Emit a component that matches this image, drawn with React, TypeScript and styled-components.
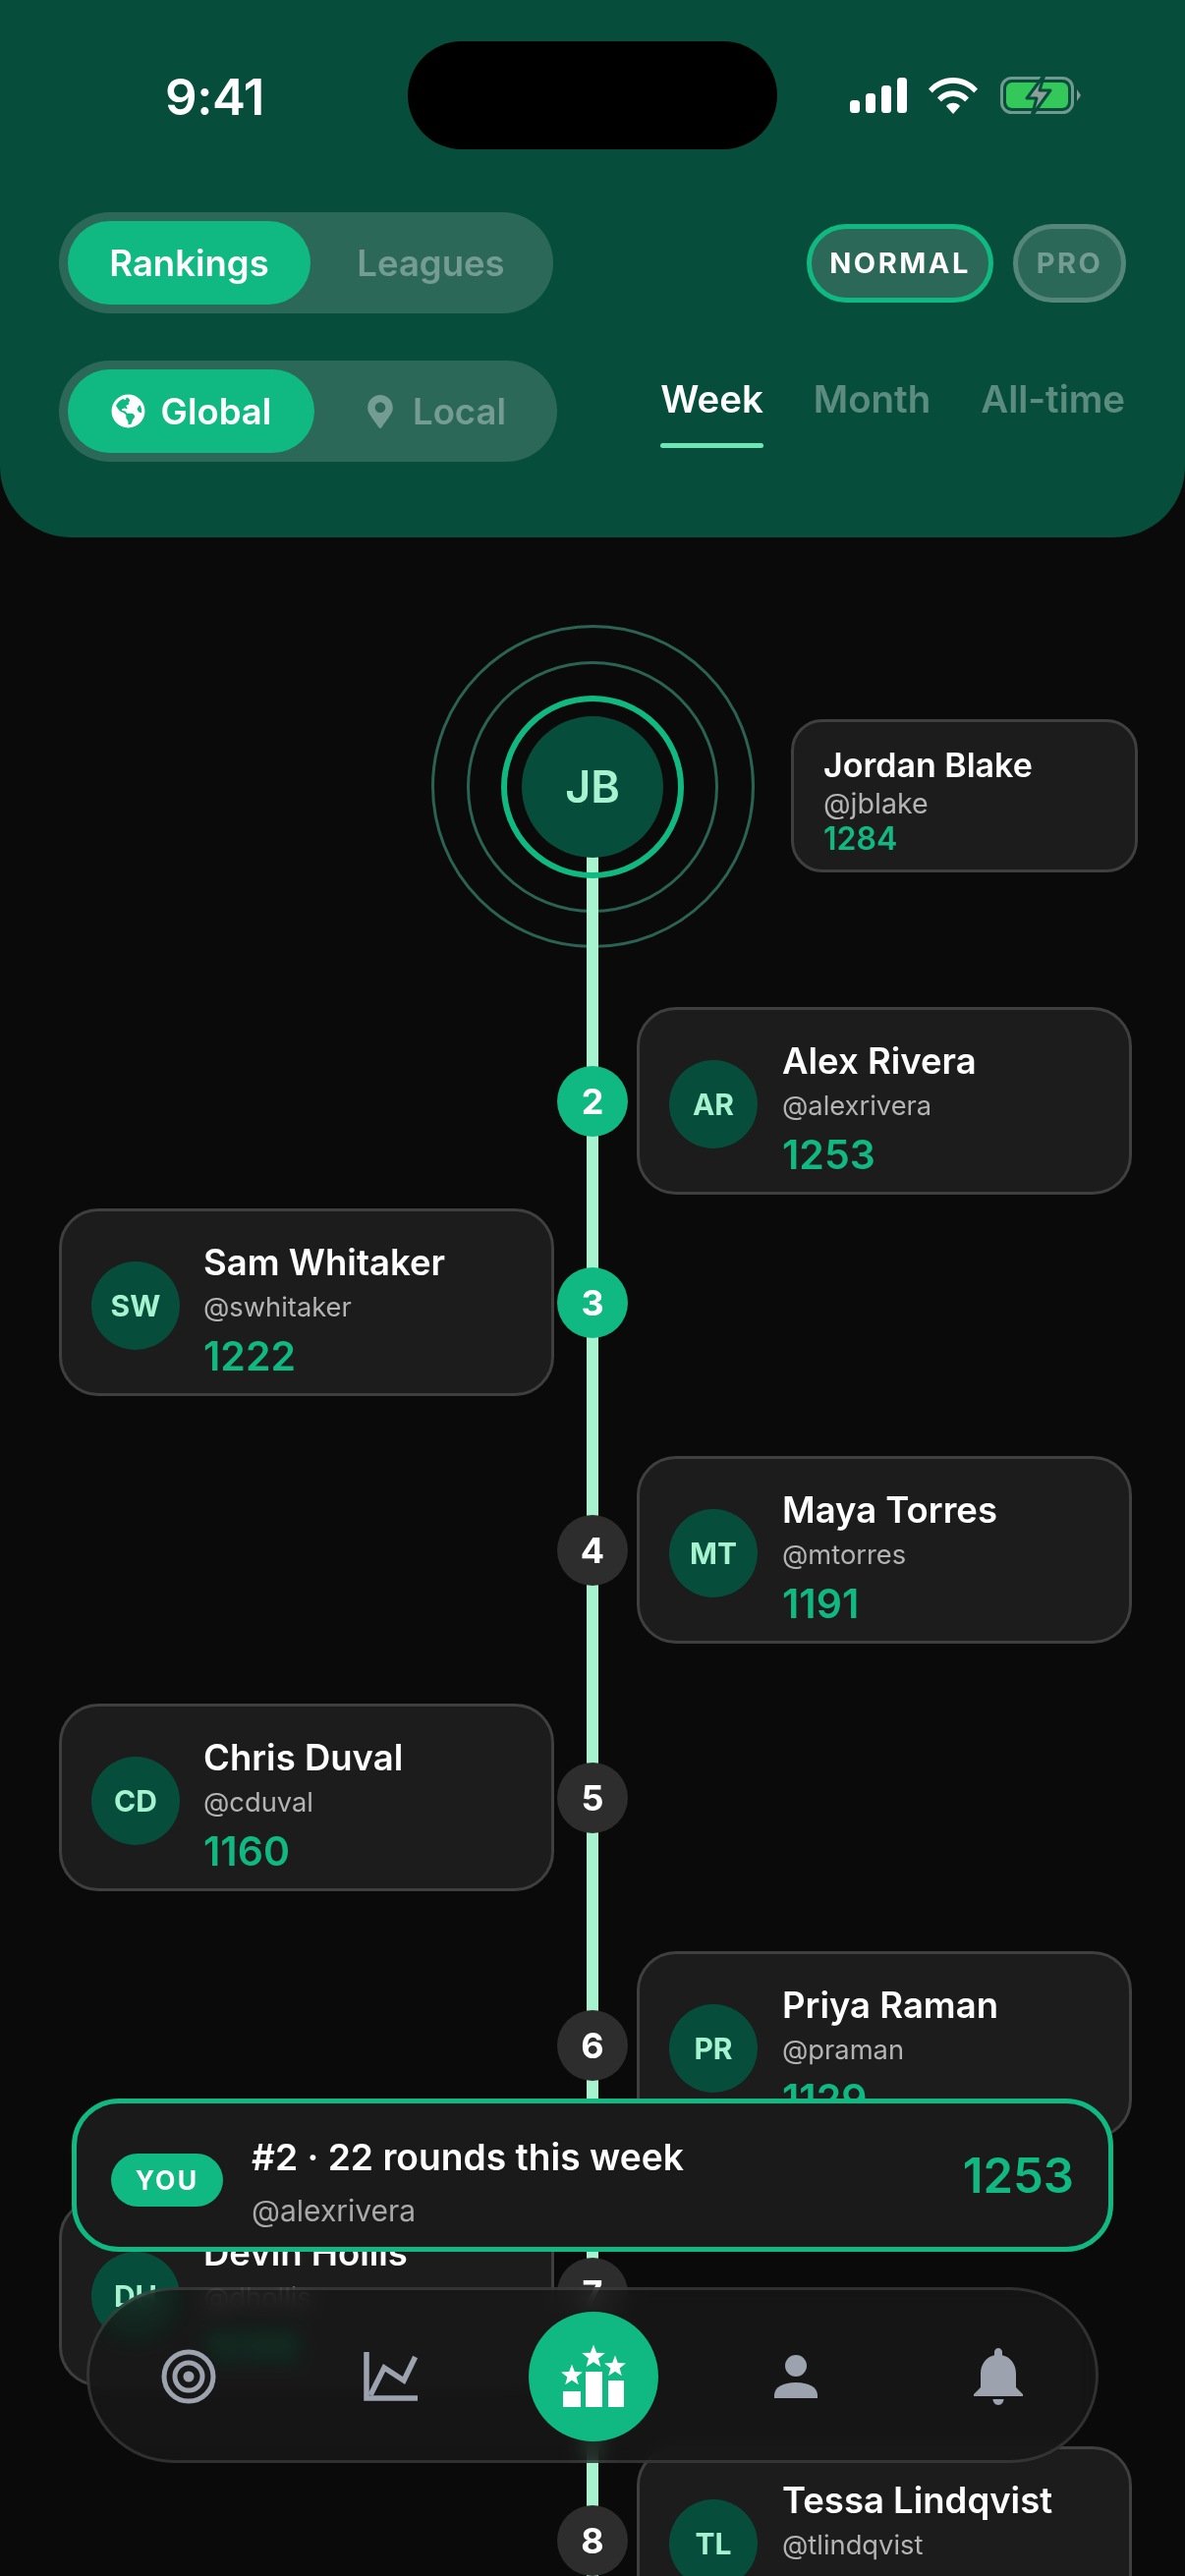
import React from 'react';
import styled, { createGlobalStyle } from 'styled-components';
import { FaGlobeAmericas, FaMapMarkerAlt } from 'react-icons/fa';

const GlobalStyle = createGlobalStyle`
  html, body { margin: 0; padding: 0; background: #0a0a0a; }
  * { box-sizing: border-box; }
  body { font-family: Inter, "Noto Sans", sans-serif; }
`;

const Page = styled.div`
  position: relative;
  width: 1206px;
  height: 2622px;
  overflow: hidden;
  background: #0a0a0a;
  color: #fff;
`;

// Header
const Header = styled.header`
  height: 547px;
  background: #064e3b;
  border-radius: 0 0 72px 72px;
  padding-top: 42px;
`;

const StatusBar = styled.div`
  display: grid;
  grid-template-columns: 415px 376px 415px;
  height: 110px;
  align-items: center;
`;

const Time = styled.div`
  font-size: 51px;
  font-weight: 600;
  letter-spacing: -0.5px;
  text-align: center;
  margin-left: 22px;
  margin-top: 2px;
`;

const Island = styled.div`
  height: 110px;
  background: #000;
  border-radius: 55px;
`;

const StatusIcons = styled.div`
  display: flex;
  align-items: center;
  padding-left: 74px;
`;

const ControlRow = styled.div<{ $top: number }>`
  display: flex;
  justify-content: space-between;
  align-items: center;
  padding: 0 60px;
  margin-top: ${p => p.$top}px;
`;

const Toggle = styled.div<{ $w: number }>`
  display: flex;
  align-items: center;
  width: ${p => p.$w}px;
  height: 103px;
  padding: 9px;
  border-radius: 52px;
  background: rgba(255, 255, 255, 0.15);
`;

const ToggleBtn = styled.div<{ $active?: boolean; $w: number }>`
  display: flex;
  align-items: center;
  justify-content: center;
  gap: 16px;
  width: ${p => p.$w}px;
  height: 85px;
  border-radius: 43px;
  font-size: 36.5px;
  font-weight: 600;
  padding-left: ${p => (p.$active ? 0 : 8)}px;
  background: ${p => (p.$active ? '#10b981' : 'transparent')};
  color: ${p => (p.$active ? '#fff' : 'rgba(255, 255, 255, 0.35)')};
`;

const Modes = styled.div`
  display: flex;
  gap: 20px;
`;

const ModePill = styled.div<{ $active?: boolean; $w: number }>`
  display: flex;
  align-items: center;
  justify-content: center;
  width: ${p => p.$w}px;
  height: 80px;
  border-radius: 40px;
  border: 5px solid ${p => (p.$active ? '#10b981' : 'rgba(255, 255, 255, 0.2)')};
  background: rgba(255, 255, 255, 0.15);
  color: ${p => (p.$active ? '#fff' : 'rgba(255, 255, 255, 0.35)')};
  font-size: 29px;
  font-weight: 700;
  letter-spacing: 2.5px;
`;

const Tabs = styled.div`
  display: flex;
  gap: 51px;
  margin-top: -26px;
  margin-right: 1px;
`;

const Tab = styled.div<{ $active?: boolean }>`
  position: relative;
  font-size: 38.4px;
  line-height: 46px;
  font-weight: 600;
  color: ${p => (p.$active ? '#fff' : 'rgba(255, 255, 255, 0.35)')};

  &::after {
    content: '';
    display: ${p => (p.$active ? 'block' : 'none')};
    position: absolute;
    left: 0;
    right: 0;
    bottom: -27px;
    height: 5px;
    border-radius: 3px;
    background: #6ee7b7;
  }
`;

// Timeline
const Timeline = styled.main`
  position: relative;
  padding-top: 89px;
`;

const Spine = styled.div`
  position: absolute;
  z-index: 1;
  top: 325px;
  bottom: 0;
  left: 597px;
  width: 12px;
  background: #a7f3d0;
`;

const Hero = styled.div`
  display: grid;
  grid-template-columns: 438px 330px 390px;
  align-items: center;
  height: 329px;
  margin-bottom: 60px;
`;

const Rings = styled.div`
  grid-column: 2;
  position: relative;
  display: flex;
  align-items: center;
  justify-content: center;
  width: 330px;
  height: 329px;
`;

const Ring = styled.div<{ $size: number; $strong?: boolean }>`
  position: absolute;
  z-index: ${p => (p.$strong ? 2 : 0)};
  width: ${p => p.$size}px;
  height: ${p => p.$size}px;
  border-radius: 50%;
  border: ${p => (p.$strong ? '6px solid #10b981' : '3px solid #2b6352')};
`;

const HeroAvatar = styled.div`
  position: relative;
  z-index: 2;
  display: flex;
  align-items: center;
  justify-content: center;
  width: 144px;
  height: 144px;
  border-radius: 50%;
  background: #064e3b;
  color: #a7f3d0;
  font-size: 45px;
  font-weight: 600;
`;

const HeroCard = styled.div`
  width: 353px;
  height: 156px;
  margin-left: 37px;
  margin-top: 18px;
  padding: 11px 30px 0;
  display: flex;
  flex-direction: column;
  justify-content: center;
  background: #1c1c1c;
  border: 3px solid #3f3f3f;
  border-radius: 32px;
`;

const Rows = styled.div`
  display: flex;
  flex-direction: column;
`;

const Row = styled.div<{ $gap: number }>`
  display: grid;
  grid-template-columns: 507px 72px 513px;
  margin-left: 60px;
  align-items: center;
  height: 191px;
  margin-bottom: ${p => p.$gap}px;
`;

const Rank = styled.div<{ $top?: boolean }>`
  position: relative;
  z-index: 2;
  grid-column: 2;
  display: flex;
  align-items: center;
  justify-content: center;
  width: 72px;
  height: 72px;
  border-radius: 50%;
  background: ${p => (p.$top ? '#10b981' : '#2d2d2d')};
  font-size: 36px;
  font-weight: 700;
`;

const Card = styled.div<{ $side: 'left' | 'right' }>`
  grid-column: ${p => (p.$side === 'left' ? 1 : 3)};
  grid-row: 1;
  justify-self: ${p => (p.$side === 'left' ? 'start' : 'end')};
  display: flex;
  align-items: center;
  gap: ${p => (p.$side === 'left' ? 24 : 25)}px;
  width: 504px;
  height: 191px;
  padding: 6px 30px 0;
  background: #1c1c1c;
  border: 3px solid #3f3f3f;
  border-radius: 40px;
`;

const Avatar = styled.div`
  flex: none;
  display: flex;
  align-items: center;
  justify-content: center;
  width: 90px;
  height: 90px;
  border-radius: 50%;
  background: #064e3b;
  color: #a7f3d0;
  font-size: 30px;
  font-weight: 700;
`;

const Info = styled.div`
  display: flex;
  flex-direction: column;
  margin-top: 11px;
`;

const Name = styled.div<{ $small?: boolean }>`
  font-size: ${p => (p.$small ? 34 : 36.5)}px;
  line-height: ${p => (p.$small ? 40 : 46)}px;
  font-weight: 600;
  color: #fff;
`;

const Handle = styled.div<{ $small?: boolean }>`
  font-size: ${p => (p.$small ? 28.6 : 27.3)}px;
  line-height: ${p => (p.$small ? 37 : 46)}px;
  color: #b4b4b4;
`;

const Score = styled.div<{ $small?: boolean }>`
  font-size: ${p => (p.$small ? 32 : 41)}px;
  line-height: ${p => (p.$small ? 36 : 52)}px;
  font-weight: 600;
  color: #10b981;
`;

// Sticky "you" card
const YouCard = styled.div`
  position: absolute;
  z-index: 5;
  left: 73px;
  top: 2136px;
  width: 1060px;
  height: 156px;
  display: flex;
  align-items: center;
  padding: 0 35px;
  background: #1a1a1a;
  border: 5px solid #10b981;
  border-radius: 48px;
`;

const YouBadge = styled.div`
  flex: none;
  display: flex;
  align-items: center;
  justify-content: center;
  width: 114px;
  height: 54px;
  margin-top: 10px;
  border-radius: 27px;
  background: #10b981;
  font-size: 26.5px;
  font-weight: 700;
  letter-spacing: 2.2px;
`;

const YouInfo = styled.div`
  flex: 1;
  margin-left: 29px;
`;

const YouTitle = styled.div`
  font-size: 37.2px;
  line-height: 44px;
  font-weight: 600;
  margin-top: 15px;
  margin-bottom: 12px;
`;

const YouHandle = styled.div`
  font-size: 30px;
  line-height: 40px;
  color: #a9a9a9;
`;

const YouScore = styled.div`
  font-size: 49px;
  font-weight: 600;
  color: #10b981;
`;

// Bottom nav
const Nav = styled.nav`
  position: absolute;
  z-index: 6;
  left: 88px;
  top: 2328px;
  width: 1030px;
  height: 179px;
  padding-top: 3px;
  display: grid;
  grid-template-columns: 202px 210px 201px 212px 199px;
  align-items: center;
  justify-items: center;
  border-radius: 90px;
  background: rgba(24, 24, 24, 0.8);
  backdrop-filter: blur(10px) saturate(180%);
  border: 3px solid rgba(255, 255, 255, 0.12);
`;

const NavHub = styled.div`
  display: flex;
  align-items: center;
  justify-content: center;
  width: 132px;
  height: 132px;
  border-radius: 50%;
  background: #10b981;
`;

const NavIcon = styled.svg`
  display: block;
  color: #9ca3af;
`;

const WifiSvg = styled.svg`
  margin-left: 22px;
`;

const BatterySvg = styled.svg`
  margin-left: 23px;
`;

const Signal = () => (
  <svg width="58" height="36" viewBox="0 0 58 36" fill="#fff">
    <rect x="0" y="23" width="10" height="13" rx="3.5" />
    <rect x="16" y="16" width="10" height="20" rx="3.5" />
    <rect x="32" y="8" width="10" height="28" rx="3.5" />
    <rect x="48" y="0" width="10" height="36" rx="3.5" />
  </svg>
);

const Wifi = () => (
  <WifiSvg width="50" height="37" viewBox="0 0 50 37" fill="#fff">
    <path d="M0 11.5C6.5 4.2 15.3 0 25 0s18.5 4.2 25 11.5l-3.8 4C40.7 9.4 33.2 5.8 25 5.8S9.3 9.4 3.8 15.5z" />
    <path d="M9 20.5C13 16 18.7 13.2 25 13.2S37 16 41 20.5l-3.9 4C34 21.2 29.7 19 25 19s-9 2.2-12.1 5.5z" />
    <path d="M18 29c1.8-2 4.2-3.2 7-3.2s5.2 1.2 7 3.2l-7 8z" />
  </WifiSvg>
);

const Battery = () => (
  <BatterySvg width="82" height="44" viewBox="0 0 82 44">
    <rect x="1.5" y="4.5" width="72" height="35" rx="10" fill="none" stroke="#6f9a8d" strokeWidth="3" />
    <rect x="6" y="9" width="63" height="26" rx="6" fill="#34c759" />
    <path d="M78 16l4 6-4 6z" fill="#8a9a94" />
    <path d="M45 1L27 25h10l-5 18 19-26H40z" fill="#8e9e98" stroke="#064e3b" strokeWidth="3" strokeLinejoin="round" />
  </BatterySvg>
);

const TargetIcon = () => (
  <NavIcon width="56" height="56" viewBox="0 0 56 56" fill="none" stroke="currentColor" strokeWidth="5">
    <circle cx="28" cy="28" r="25" />
    <circle cx="28" cy="28" r="14" />
    <circle cx="28" cy="28" r="5.5" fill="currentColor" stroke="none" />
  </NavIcon>
);

const ChartIcon = () => (
  <NavIcon width="56" height="50" viewBox="0 0 56 50" fill="none" stroke="currentColor" strokeWidth="5.5">
    <path d="M3 0v47h52" />
    <path d="M7 44L21 16l20 13L52.6 5" />
  </NavIcon>
);

const star = (cx: number, cy: number, r: number) => {
  const pts: string[] = [];
  for (let i = 0; i < 10; i++) {
    const rad = i % 2 === 0 ? r : r * 0.42;
    const a = (Math.PI / 5) * i - Math.PI / 2;
    pts.push(`${(cx + rad * Math.cos(a)).toFixed(1)},${(cy + rad * Math.sin(a)).toFixed(1)}`);
  }
  return pts.join(' ');
};

const PodiumIcon = () => (
  <svg width="68" height="66" viewBox="0 0 68 66" fill="#fff">
    <rect x="3" y="48" width="18" height="16" />
    <rect x="26" y="28" width="17" height="36" />
    <rect x="49" y="37" width="16" height="27" />
    <polygon points={star(12, 32, 11.5)} />
    <polygon points={star(34, 13, 12.5)} />
    <polygon points={star(56, 23, 11.5)} />
  </svg>
);

const PersonIcon = () => (
  <NavIcon width="44" height="44" viewBox="0 0 44 44" fill="currentColor">
    <circle cx="22" cy="11" r="11" />
    <path d="M0 44v-3C0 33 9 28 22 28s22 5 22 13v3z" />
  </NavIcon>
);

const BellIcon = () => (
  <NavIcon width="50" height="58" viewBox="0 0 50 58" fill="currentColor">
    <path d="M25 0c2.2 0 4 1.8 4 4v3.2C37.5 9 43 16.5 43 26v14l7 7v2H0v-2l7-7V26C7 16.5 12.5 9 21 7.2V4c0-2.2 1.8-4 4-4z" />
    <path d="M19.5 52h11c0 3.2-2.4 6-5.5 6s-5.5-2.8-5.5-6z" />
  </NavIcon>
);

type Player = {
  rank: number;
  initials: string;
  name: string;
  handle: string;
  score: number;
  side: 'left' | 'right';
  gap: number;
};

const players: Player[] = [
  { rank: 2, initials: 'AR', name: 'Alex Rivera', handle: '@alexrivera', score: 1253, side: 'right', gap: 14 },
  { rank: 3, initials: 'SW', name: 'Sam Whitaker', handle: '@swhitaker', score: 1222, side: 'left', gap: 61 },
  { rank: 4, initials: 'MT', name: 'Maya Torres', handle: '@mtorres', score: 1191, side: 'right', gap: 61 },
  { rank: 5, initials: 'CD', name: 'Chris Duval', handle: '@cduval', score: 1160, side: 'left', gap: 61 },
  { rank: 6, initials: 'PR', name: 'Priya Raman', handle: '@praman', score: 1129, side: 'right', gap: 61 },
  { rank: 7, initials: 'DH', name: 'Devin Hollis', handle: '@dhollis', score: 1098, side: 'left', gap: 61 },
  { rank: 8, initials: 'TL', name: 'Tessa Lindqvist', handle: '@tlindqvist', score: 1067, side: 'right', gap: 61 },
];

export default function App() {
  return (
    <Page>
      <GlobalStyle />
      <Header>
        <StatusBar>
          <Time>9:41</Time>
          <Island />
          <StatusIcons>
            <Signal />
            <Wifi />
            <Battery />
          </StatusIcons>
        </StatusBar>
        <ControlRow $top={64}>
          <Toggle $w={503}>
            <ToggleBtn $active $w={247}>Rankings</ToggleBtn>
            <ToggleBtn $w={237}>Leagues</ToggleBtn>
          </Toggle>
          <Modes>
            <ModePill $active $w={190}>NORMAL</ModePill>
            <ModePill $w={115}>PRO</ModePill>
          </Modes>
        </ControlRow>
        <ControlRow $top={48}>
          <Toggle $w={507}>
            <ToggleBtn $active $w={251}>
              <FaGlobeAmericas size={35} />
              Global
            </ToggleBtn>
            <ToggleBtn $w={237}>
              <FaMapMarkerAlt size={34} />
              Local
            </ToggleBtn>
          </Toggle>
          <Tabs>
            <Tab $active>Week</Tab>
            <Tab>Month</Tab>
            <Tab>All-time</Tab>
          </Tabs>
        </ControlRow>
      </Header>

      <Timeline>
        <Spine />
        <Hero>
          <Rings>
            <Ring $size={329} />
            <Ring $size={256} />
            <Ring $size={186} $strong />
            <HeroAvatar>JB</HeroAvatar>
          </Rings>
          <HeroCard>
            <Name $small>Jordan Blake</Name>
            <Handle $small>@jblake</Handle>
            <Score $small>1284</Score>
          </HeroCard>
        </Hero>
        <Rows>
          {players.map(p => (
            <Row key={p.rank} $gap={p.gap}>
              <Rank $top={p.rank <= 3}>{p.rank}</Rank>
              <Card $side={p.side}>
                <Avatar>{p.initials}</Avatar>
                <Info>
                  <Name>{p.name}</Name>
                  <Handle>{p.handle}</Handle>
                  <Score>{p.score}</Score>
                </Info>
              </Card>
            </Row>
          ))}
        </Rows>
      </Timeline>

      <YouCard>
        <YouBadge>YOU</YouBadge>
        <YouInfo>
          <YouTitle>#2 · 22 rounds this week</YouTitle>
          <YouHandle>@alexrivera</YouHandle>
        </YouInfo>
        <YouScore>1253</YouScore>
      </YouCard>

      <Nav>
        <TargetIcon />
        <ChartIcon />
        <NavHub>
          <PodiumIcon />
        </NavHub>
        <PersonIcon />
        <BellIcon />
      </Nav>
    </Page>
  );
}
